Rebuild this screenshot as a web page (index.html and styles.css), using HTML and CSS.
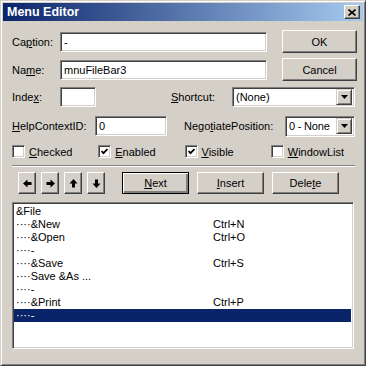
FILE: index.html
```html
<!DOCTYPE html>
<html lang="en">
<head>
    <meta charset="UTF-8">
    <title>Menu Editor</title>
    <link rel="stylesheet" href="styles.css">
</head>
<body>
    <div class="window">
        <div class="titlebar">
            <span class="title">Menu Editor</span>
            <div class="close">
                <svg width="8" height="7" viewBox="0 0 8 7"><path d="M0.5 0.5 L7.5 6.5 M7.5 0.5 L0.5 6.5" stroke="#000" stroke-width="1.6"/></svg>
            </div>
        </div>

        <div class="client">
            <div class="row tall">
                <span class="lbl lbl-main">Ca<u>p</u>tion:</span>
                <div class="field field-wide">-</div>
                <div class="btn push-right">OK</div>
            </div>

            <div class="row tall gap5">
                <span class="lbl lbl-main">Na<u>m</u>e:</span>
                <div class="field field-wide">mnuFileBar3</div>
                <div class="btn push-right">Cancel</div>
            </div>

            <div class="row gap6">
                <span class="lbl lbl-main">Inde<u>x</u>:</span>
                <div class="field field-index"></div>
                <span class="lbl lbl-shortcut"><u>S</u>hortcut:</span>
                <div class="field combo combo-shortcut">
                    <span>(None)</span>
                    <div class="drop"><svg width="7" height="4" viewBox="0 0 7 4"><path d="M0 0 H7 L3.5 4 Z" fill="#000"/></svg></div>
                </div>
            </div>

            <div class="row gap9">
                <span class="lbl lbl-help"><u>H</u>elpContextID:</span>
                <div class="field field-help">0</div>
                <span class="lbl lbl-negotiate">Nego<u>t</u>iatePosition:</span>
                <div class="field combo combo-negotiate">
                    <span>0 - None</span>
                    <div class="drop"><svg width="7" height="4" viewBox="0 0 7 4"><path d="M0 0 H7 L3.5 4 Z" fill="#000"/></svg></div>
                </div>
            </div>

            <div class="row checks">
                <div class="check-item"><span class="box"></span><span><u>C</u>hecked</span></div>
                <div class="check-item"><span class="box"><svg width="7" height="7" viewBox="0 0 7 7"><path d="M0.5 3 L2.5 5.2 L6.5 1" fill="none" stroke="#000" stroke-width="1.8"/></svg></span><span><u>E</u>nabled</span></div>
                <div class="check-item"><span class="box"><svg width="7" height="7" viewBox="0 0 7 7"><path d="M0.5 3 L2.5 5.2 L6.5 1" fill="none" stroke="#000" stroke-width="1.8"/></svg></span><span><u>V</u>isible</span></div>
                <div class="check-item"><span class="box"></span><span><u>W</u>indowList</span></div>
            </div>

            <div class="separator"></div>

            <div class="row toolbar">
                <div class="arrows">
                    <div class="btn arrow"><svg width="9" height="9" viewBox="0 0 9 9"><path d="M0 4.5 L4.5 0.5 V3 H8.5 V6 H4.5 V8.5 Z" fill="#000"/></svg></div>
                    <div class="btn arrow"><svg width="9" height="9" viewBox="0 0 9 9"><path d="M9 4.5 L4.5 0.5 V3 H0.5 V6 H4.5 V8.5 Z" fill="#000"/></svg></div>
                    <div class="btn arrow"><svg width="9" height="9" viewBox="0 0 9 9"><path d="M4.5 0 L0.5 4.5 H3 V8.5 H6 V4.5 H8.5 Z" fill="#000"/></svg></div>
                    <div class="btn arrow"><svg width="9" height="9" viewBox="0 0 9 9"><path d="M4.5 9 L0.5 4.5 H3 V0.5 H6 V4.5 H8.5 Z" fill="#000"/></svg></div>
                </div>
                <div class="actions">
                    <div class="btn action default"><span><u>N</u>ext</span></div>
                    <div class="btn action"><span><u>I</u>nsert</span></div>
                    <div class="btn action"><span>Dele<u>t</u>e</span></div>
                </div>
            </div>

            <div class="listbox">
                <div class="item"><span>&amp;File</span><span></span></div>
                <div class="item"><span>····&amp;New</span><span>Ctrl+N</span></div>
                <div class="item"><span>····&amp;Open</span><span>Ctrl+O</span></div>
                <div class="item"><span>····-</span><span></span></div>
                <div class="item"><span>····&amp;Save</span><span>Ctrl+S</span></div>
                <div class="item"><span>····Save &amp;As ...</span><span></span></div>
                <div class="item"><span>····-</span><span></span></div>
                <div class="item"><span>····&amp;Print</span><span>Ctrl+P</span></div>
                <div class="item selected"><span>····-</span><span></span></div>
            </div>
        </div>
    </div>
</body>
</html>
```

FILE: styles.css
```css
body {
    margin: 0;
    font-family: "Liberation Sans", Arial, sans-serif;
    font-size: 11px;
    color: #000;
}
u {
    text-decoration: underline;
    text-underline-offset: 1px;
}
.window {
    width: 366px;
    height: 366px;
    box-sizing: border-box;
    background-color: #d4d0c8;
    padding: 2px;
    border-top: 1px solid #d4d0c8;
    border-left: 1px solid #d4d0c8;
    border-right: 1px solid #404040;
    border-bottom: 1px solid #404040;
    box-shadow: inset 1px 1px #ffffff, inset -1px -1px #808080;
}
.titlebar {
    height: 18px;
    display: flex;
    align-items: center;
    justify-content: space-between;
    padding: 0 3px;
    background: linear-gradient(to right, #0a246a, #a6caf0);
}
.title {
    color: #fff;
    font-weight: bold;
    font-size: 12.5px;
    padding-left: 1px;
}
.close {
    width: 16px;
    height: 14px;
    box-sizing: border-box;
    background-color: #d4d0c8;
    border-top: 1px solid #fff;
    border-left: 1px solid #fff;
    border-right: 1px solid #404040;
    border-bottom: 1px solid #404040;
    box-shadow: inset -1px -1px #808080;
    display: flex;
    align-items: center;
    justify-content: center;
}
.client {
    padding: 9px 6px 0 9px;
}
.row {
    display: flex;
    align-items: center;
    height: 20px;
}
.row.tall {
    height: 23px;
}
.gap5 { margin-top: 5px; }
.gap6 { margin-top: 6px; }
.gap9 { margin-top: 9px; }
.lbl {
    white-space: nowrap;
}
.lbl-main { width: 48px; }
.lbl-shortcut { width: 61px; margin-left: 75px; }
.lbl-help { width: 83px; }
.lbl-negotiate { width: 101px; margin-left: 17px; }

.field {
    height: 20px;
    box-sizing: border-box;
    background-color: #fff;
    border-top: 1px solid #808080;
    border-left: 1px solid #808080;
    border-right: 1px solid #fff;
    border-bottom: 1px solid #fff;
    box-shadow: inset 1px 1px #404040, inset -1px -1px #d4d0c8;
    padding: 2px 3px;
    line-height: 15px;
}
.field-wide { width: 207px; }
.field-index { width: 36px; }
.field-help { width: 72px; }
.combo {
    display: flex;
    justify-content: space-between;
    padding: 2px 2px 2px 3px;
    height: 21px;
}
.combo-shortcut { width: 123px; height: 20px; }
.combo-negotiate { width: 70px; letter-spacing: -0.2px; }
.drop {
    width: 16px;
    height: 16px;
    box-sizing: border-box;
    margin-top: -1px;
    background-color: #d4d0c8;
    border-top: 1px solid #d4d0c8;
    border-left: 1px solid #d4d0c8;
    border-right: 1px solid #404040;
    border-bottom: 1px solid #404040;
    box-shadow: inset 1px 1px #fff, inset -1px -1px #808080;
    display: flex;
    align-items: center;
    justify-content: center;
}

.btn {
    box-sizing: border-box;
    background-color: #d4d0c8;
    border-top: 1px solid #fff;
    border-left: 1px solid #fff;
    border-right: 1px solid #404040;
    border-bottom: 1px solid #404040;
    box-shadow: inset -1px -1px #808080;
    display: flex;
    align-items: center;
    justify-content: center;
}
.push-right {
    margin-left: auto;
    width: 75px;
    height: 23px;
}

.checks {
    margin-top: 9px;
    height: 13px;
}
.check-item {
    width: 87px;
    display: flex;
    align-items: center;
    gap: 4px;
}
.box {
    width: 13px;
    height: 13px;
    box-sizing: border-box;
    background-color: #fff;
    border-top: 1px solid #808080;
    border-left: 1px solid #808080;
    border-right: 1px solid #fff;
    border-bottom: 1px solid #fff;
    box-shadow: inset 1px 1px #404040, inset -1px -1px #d4d0c8;
    display: flex;
    align-items: center;
    justify-content: center;
}

.separator {
    margin-top: 7px;
    width: 343px;
    border-top: 1px solid #808080;
    border-bottom: 1px solid #fff;
}

.toolbar {
    margin-top: 5px;
    height: 22px;
}
.arrows {
    display: flex;
    gap: 5px;
    margin-left: 6px;
}
.arrow {
    width: 18px;
    height: 22px;
}
.actions {
    display: flex;
    gap: 8px;
    margin-left: 17px;
}
.action {
    width: 67px;
    height: 22px;
}
.action.default {
    border: 1px solid #000;
    box-shadow: inset 1px 1px #fff, inset -2px -2px #808080;
}

.listbox {
    margin-top: 8px;
    width: 342px;
    height: 147px;
    box-sizing: border-box;
    background-color: #fff;
    border-top: 1px solid #808080;
    border-left: 1px solid #808080;
    border-right: 1px solid #fff;
    border-bottom: 1px solid #fff;
    box-shadow: inset 1px 1px #404040, inset -1px -1px #d4d0c8;
    padding: 2px 2px 0 1px;
}
.item {
    display: grid;
    grid-template-columns: 197px auto;
    height: 13px;
    line-height: 13px;
    padding-left: 2px;
    white-space: nowrap;
}
.item.selected {
    background-color: #0a246a;
    color: #fff;
}
```
